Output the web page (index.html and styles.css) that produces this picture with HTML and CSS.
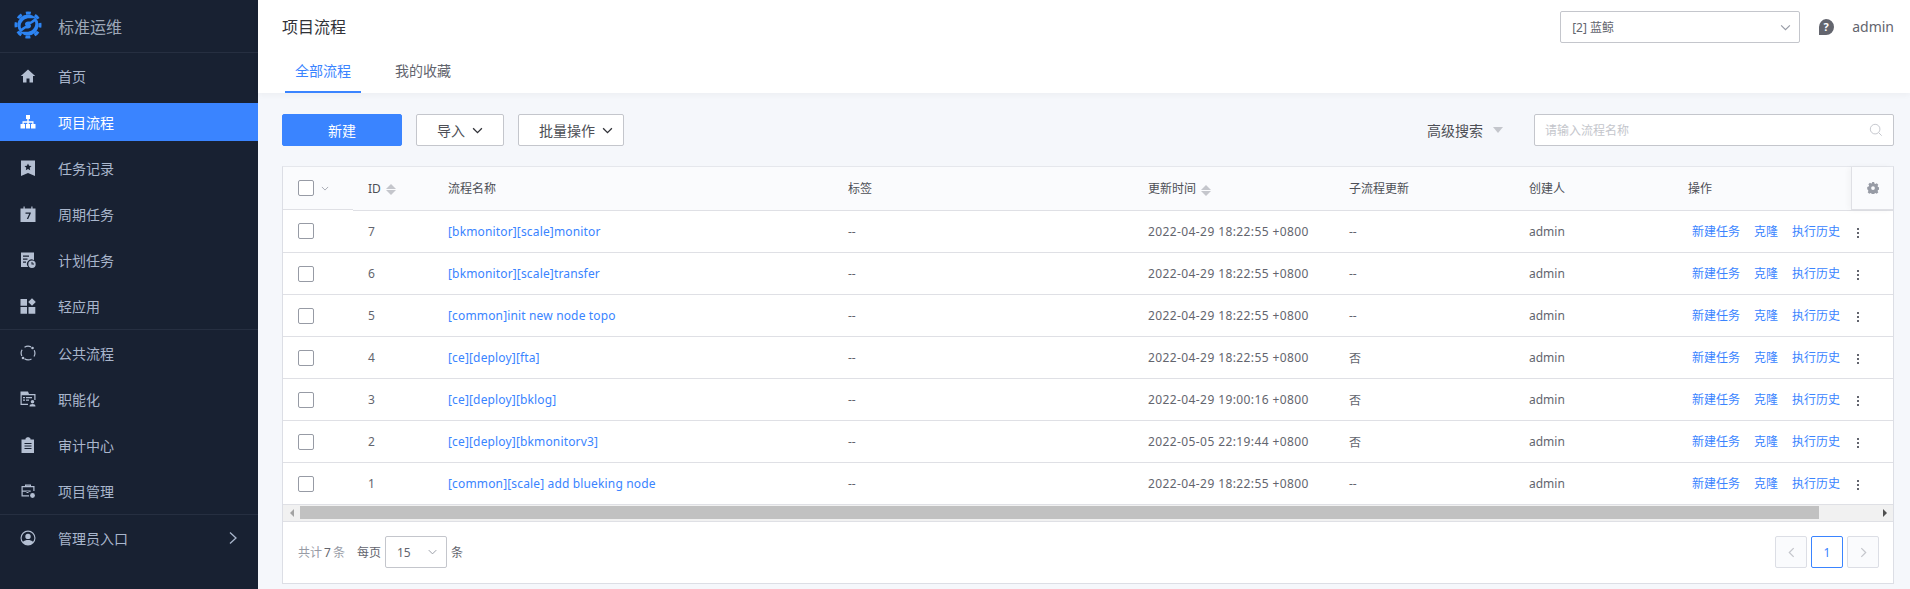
FILE: index.html
```html
<!DOCTYPE html>
<html lang="zh-CN">
<head>
  <meta charset="UTF-8">
  <title>项目流程</title>
  <link rel="stylesheet" href="styles.css">
</head>
<body>

<aside class="side">
  <div class="brand">
    <svg class="logo" viewBox="0 0 30 30"><circle cx="15" cy="15" r="10.500" fill="#2d84f2"/><circle cx="15" cy="15" r="12" fill="none" stroke="#2d84f2" stroke-width="3" stroke-dasharray="5 4.420" stroke-dashoffset="2.500"/><path fill="#182132" d="M8 18.500c-1-3.200.2-6.300 2.500-8.200 1.800-1.400 3.800-2 5.900-2h5.400l-4.300 3.300h-2.500c-1.600 0-3 1.100-3 2.400 0 .7.300 1.200.8 1.500zM22 11.500c1 3.200-.2 6.300-2.500 8.200-1.800 1.400-3.800 2-5.900 2H8.200l4.300-3.300h2.500c1.600 0 3-1.100 3-2.400 0-.7-.3-1.200-.8-1.500z"/></svg>
    <span>标准运维</span>
  </div>
  <div class="group">
    <a class="item"><svg viewBox="0 0 16 16"><path d="M8 1.500L.8 8h2.200v6.500h3.500v-4h3v4H13V8h2.200z"/></svg>首页</a>
    <a class="item on"><svg viewBox="0 0 16 16"><path d="M6 1h4v4H8.700v2.300h4.800V10H15.500v4.500h-4.500V10h1.300V8.700H8.700V10H10v4.500H6V10h1.300V8.700H3.700V10H5v4.500H.5V10h2V7.300h4.800V5H6z"/></svg>项目流程</a>
    <a class="item"><svg viewBox="0 0 16 16"><path fill-rule="evenodd" d="M1 .5h14v15.500L8 13l-7 3zM8 3.500l-1.100 2.300-2.400.3 1.800 1.700-.5 2.500L8 9.100l2.200 1.200-.5-2.500 1.800-1.700-2.400-.3z"/></svg>任务记录</a>
    <a class="item"><svg viewBox="0 0 16 16"><path fill-rule="evenodd" d="M.5 2.500h3V.5h1.200v2h6.600V.5h1.200v2h3v13.500H.5zM5.500 6.500v1.200h3.700l-2.400 5.300h1.400l2.600-5.800V6.500z"/></svg>周期任务</a>
    <a class="item"><svg viewBox="0 0 16 16"><path fill-rule="evenodd" d="M1 .5h13v7.700a4.500 4.500 0 0 0-5.800 6.800H1zM3 3.500v1.200h6V3.500zM3 6.500v1.200h4.500V6.500zM3 9.500v1.200h3V9.500z"/><path fill-rule="evenodd" d="M12 8.500a3.700 3.700 0 1 1 0 7.400 3.700 3.700 0 0 1 0-7.400zM11.500 10v2.600h2.500v-1h-1.500V10z"/></svg>计划任务</a>
    <a class="item"><svg viewBox="0 0 16 16"><path d="M.5 1h6.500v6.800H.5zM.5 9h6.500v6.800H.5zM8.500 9h6.800v6.800H8.500zM12 .2l3.800 3.800-3.800 3.800L8.200 4z"/></svg>轻应用</a>
  </div>
  <div class="group">
    <a class="item"><svg viewBox="0 0 16 16" class="line"><path d="M4.500 2.300A6.700 6.700 0 0 1 11 1.900M14.200 5.200a6.700 6.700 0 0 1-.2 6.300M11.500 14a6.700 6.700 0 0 1-7-.2M1.800 11a6.700 6.700 0 0 1 .3-6.300"/><circle class="dot" cx="12.500" cy="3" r="1.300"/><circle class="dot" cx="3" cy="13" r="1.300"/></svg>公共流程</a>
    <a class="item"><svg viewBox="0 0 16 16"><path fill-rule="evenodd" d="M.5.500h7.500l1 2.500h6.500v6h-1.200V4.300H1.700v8.500H8V14H.5zM3 6h2v1.200H3zM6 6h6v1.200H6zM3 8.500h2v1.200H3zM6 8.500h3v1.200H6z"/><path d="M12.500 9a1.800 1.800 0 1 1 0 3.600 1.800 1.800 0 0 1 0-3.600zM9.500 15.500c0-1.800 1.300-2.500 3-2.500s3 .7 3 2.500z"/></svg>职能化</a>
    <a class="item"><svg viewBox="0 0 16 16"><path fill-rule="evenodd" d="M5.500 2.500V1.500L7 .2h2l1.500 1.300v1h3.500v13.500H1.500V2.500zM4.500 6v1h7V6zM4.500 8.500v1h7v-1zM4.500 11v1h7v-1z"/></svg>审计中心</a>
    <a class="item"><svg viewBox="0 0 16 16"><path fill-rule="evenodd" d="M5 3V1.500h6V3h3.500v5h-1.200V4.200H2.700v3.300h8v1.200h-8v3.600H9V13.500H1.500V3zM6.200 2.700V3h3.600v-.3zM6.500 7h2v3h-2z"/><circle cx="12.500" cy="12.500" r="2.400"/></svg>项目管理</a>
  </div>
  <div class="group last">
    <a class="item"><svg viewBox="0 0 16 16"><path fill-rule="evenodd" d="M8 .5a7.500 7.500 0 1 1 0 15A7.500 7.500 0 0 1 8 .5zm0 1.200a6.300 6.300 0 0 0-5 10.100C4.200 10.600 6 10 8 10s3.800.6 5 1.800A6.300 6.300 0 0 0 8 1.700zM8 3.700a2.700 2.700 0 1 1 0 5.400 2.700 2.700 0 0 1 0-5.400z"/></svg>管理员入口<svg class="arrow" viewBox="0 0 10 16"><path d="M2 2.500L8 8l-6 5.500" fill="none" stroke="#a9b6cc" stroke-width="1.300"/></svg></a>
  </div>
</aside>

<main class="main">
  <header class="top">
    <div class="top-row">
      <h1>项目流程</h1>
      <div class="top-right">
        <div class="select proj"><span>[2] 蓝鲸</span><svg class="chev" viewBox="0 0 12 8"><path d="M1 1.500L6 6.500l5-5"/></svg></div>
        <svg class="help" viewBox="0 0 16 16"><path fill="#63656e" d="M8 0a8 8 0 1 1 0 16H1v-8a8 8 0 0 1 7-8z"/><text x="8" y="12" text-anchor="middle" class="help-q">?</text></svg>
        <span class="user">admin</span>
      </div>
    </div>
    <nav class="tabs">
      <a class="tab on">全部流程</a>
      <a class="tab">我的收藏</a>
    </nav>
  </header>

  <section class="body">
    <div class="toolbar">
      <button class="btn primary">新建</button>
      <button class="btn">导入<svg class="chev dark" viewBox="0 0 12 8"><path d="M1 1.500L6 6.500l5-5"/></svg></button>
      <button class="btn batch">批量操作<svg class="chev dark" viewBox="0 0 12 8"><path d="M1 1.500L6 6.500l5-5"/></svg></button>
      <div class="search-side">
        <span class="adv">高级搜索<i class="tri"></i></span>
        <div class="search"><span>请输入流程名称</span><svg viewBox="0 0 16 16"><circle cx="7" cy="7" r="5.500"/><path d="M11 11l3.500 3.500"/></svg></div>
      </div>
    </div>

    <div class="panel">
      <table class="grid">
        <colgroup>
          <col class="c-check"><col class="c-id"><col class="c-name"><col class="c-tag"><col class="c-time"><col class="c-sub"><col class="c-user"><col>
        </colgroup>
        <thead>
          <tr>
            <th><span class="box"></span><svg class="chev small" viewBox="0 0 12 8"><path d="M1 1.500L6 6.500l5-5"/></svg></th>
            <th>ID<i class="sort"></i></th>
            <th>流程名称</th>
            <th>标签</th>
            <th>更新时间<i class="sort"></i></th>
            <th>子流程更新</th>
            <th>创建人</th>
            <th>操作</th>
          </tr>
        </thead>
        <tbody id="rows"></tbody>
      </table>
      <div class="gear"><svg viewBox="0 0 16 16"><path fill-rule="evenodd" fill="#979ba5" d="M6.500 0h3l.4 1.900 1.400.6 1.700-1 2.100 2.100-1 1.700.6 1.400 1.900.4v3l-1.900.4-.6 1.400 1 1.700-2.100 2.100-1.700-1-1.400.6-.4 1.900h-3l-.4-1.900-1.400-.6-1.700 1-2.100-2.100 1-1.700-.6-1.400L.3 9.500v-3l1.900-.4.600-1.400-1-1.700 2.100-2.100 1.700 1 1.400-.6zM8 5.500a2.500 2.500 0 1 0 0 5 2.500 2.500 0 0 0 0-5z"/></svg></div>
      <div class="hscroll">
        <i class="sb-l"></i>
        <div class="track"><div class="thumb"></div></div>
        <i class="sb-r"></i>
      </div>
      <div class="pager">
        <span class="total">共计<b>7</b>条</span>
        <span class="per">每页</span>
        <div class="select size"><span>15</span><svg class="chev" viewBox="0 0 12 8"><path d="M1 1.500L6 6.500l5-5"/></svg></div>
        <span class="per">条</span>
        <div class="pages">
          <a class="page off"><svg viewBox="0 0 8 12"><path d="M6.500 1L1.500 6l5 5"/></svg></a>
          <a class="page on">1</a>
          <a class="page off"><svg viewBox="0 0 8 12"><path d="M1.500 1l5 5-5 5"/></svg></a>
        </div>
      </div>
    </div>
  </section>
</main>

<script>
const data = [
  [7, '[bkmonitor][scale]monitor', '2022-04-29 18:22:55 +0800', '--'],
  [6, '[bkmonitor][scale]transfer', '2022-04-29 18:22:55 +0800', '--'],
  [5, '[common]init new node topo', '2022-04-29 18:22:55 +0800', '--'],
  [4, '[ce][deploy][fta]', '2022-04-29 18:22:55 +0800', '否'],
  [3, '[ce][deploy][bklog]', '2022-04-29 19:00:16 +0800', '否'],
  [2, '[ce][deploy][bkmonitorv3]', '2022-05-05 22:19:44 +0800', '否'],
  [1, '[common][scale] add blueking node', '2022-04-29 18:22:55 +0800', '--']
];
const tbody = document.getElementById('rows');
data.forEach(r => {
  const tr = document.createElement('tr');
  tr.innerHTML = '<td><span class="box"></span></td>' +
    '<td>' + r[0] + '</td>' +
    '<td><a class="link name">' + r[1] + '</a></td>' +
    '<td>--</td>' +
    '<td class="date">' + r[2] + '</td>' +
    '<td>' + r[3] + '</td>' +
    '<td>admin</td>' +
    '<td class="ops"><a class="link">新建任务</a><a class="link">克隆</a><a class="link">执行历史</a><span class="more"><i></i><i></i><i></i></span></td>';
  tbody.appendChild(tr);
});
</script>

</body>
</html>
```

FILE: styles.css
```css
* { box-sizing: border-box; }
html, body { height: 100%; }
body { margin: 0; display: flex; height: 589px; overflow: hidden; font-family: "Noto Sans", "Noto Sans CJK SC", sans-serif; font-size: 12px; color: #63656e; background: #f5f7fb; }
a { text-decoration: none; }
svg { display: block; flex: none; }

/* sidebar */
.side { width: 258px; flex: none; background: #182132; color: #a9b6cc; font-size: 14px; }
.brand { height: 53px; display: flex; align-items: center; padding-left: 13px; border-bottom: 1px solid #262f41; font-size: 16px; color: #9ea8b8; }
.brand span { margin-left: 15px; }
.logo { width: 30px; height: 30px; margin-bottom: 2px; }
.group { display: flex; flex-direction: column; gap: 8px; padding: 4px 0; border-bottom: 1px solid #262f41; }
.group.last { border-bottom: none; }
.item { height: 38px; display: flex; align-items: center; padding-left: 20px; color: #a9b6cc; }
.item svg { width: 16px; height: 16px; margin-right: 22px; fill: #b4bfd2; }
.item svg.line { fill: none; stroke: #b4bfd2; stroke-width: 1.200; }
.item .dot { fill: #b4bfd2; stroke: none; }
.item.on { background: #3a84ff; color: #fff; }
.item.on svg { fill: #fff; }
.item svg.arrow { width: 10px; height: 16px; margin: 0 0 0 auto; position: relative; left: -20px; fill: none; }

/* header */
.main { flex: 1; min-width: 0; display: flex; flex-direction: column; }
.top { height: 93px; background: #fff; box-shadow: 0 2px 6px rgba(0, 0, 0, .04); padding: 0 16px 0 24px; position: relative; }
.top-row { height: 53px; display: flex; align-items: center; justify-content: space-between; }
h1 { margin: 0; font-size: 16px; font-weight: 400; color: #313238; position: relative; top: -1px; }
.top-right { display: flex; align-items: center; }
.select { display: flex; align-items: center; justify-content: space-between; height: 32px; border: 1px solid #c4c6cc; border-radius: 2px; background: #fff; }
.proj { width: 240px; padding: 0 8px 0 11px; margin-top: 1px; }
.chev { width: 9px; height: 6px; fill: none; stroke: #979ba5; stroke-width: 1.300; }
.proj .chev { width: 11px; height: 7px; }
.help { width: 16px; height: 16px; margin-left: 18px; }
.help-q { font-size: 11px; font-weight: 700; fill: #fff; }
.user { margin-left: 18px; font-size: 14px; }
.tabs { display: flex; height: 40px; margin-left: 3px; }
.tab { width: 76px; margin-right: 24px; text-align: center; line-height: 35px; height: 40px; font-size: 14px; color: #63656e; }
.tab.on { color: #3a84ff; border-bottom: 2px solid #3a84ff; }

/* toolbar */
.body { flex: 1; padding: 21px 16px 0 24px; }
.toolbar { display: flex; align-items: center; height: 32px; }
.btn { height: 32px; padding: 0; border: 1px solid #c4c6cc; border-radius: 2px; background: #fff; color: #4d4f56; font: inherit; font-size: 14px; display: flex; align-items: center; justify-content: center; width: 88px; margin-right: 14px; }
.btn .chev { margin-left: 7px; }
.chev.dark { width: 11px; height: 7px; stroke: #313238; stroke-width: 1.500; }
.btn.primary { width: 120px; background: #3a84ff; border-color: #3a84ff; color: #fff; }
.btn.batch { width: 106px; padding-left: 10px; }
.search-side { margin-left: auto; display: flex; align-items: center; }
.adv { display: flex; align-items: center; font-size: 14px; color: #4d4f56; }
.tri { width: 0; height: 0; border: 5px solid transparent; border-top: 6px solid #c4c6cc; border-bottom: 0; margin-left: 10px; }
.search { width: 360px; height: 32px; margin-left: 31px; display: flex; align-items: center; justify-content: space-between; padding: 0 10px; background: #fff; border: 1px solid #c4c6cc; border-radius: 2px; color: #c4c6cc; }
.search svg { width: 14px; height: 14px; fill: none; stroke: #c4c6cc; stroke-width: 1.100; }

/* table */
.panel { margin-top: 20px; border: 1px solid #dcdee5; border-top: 1px solid #e5e7ec; background: #fff; position: relative; }
.grid { width: 100%; table-layout: fixed; border-collapse: collapse; }
.c-check { width: 70px; }
.c-id { width: 80px; }
.c-name { width: 400px; }
.c-tag { width: 300px; }
.c-time { width: 201px; }
.c-sub { width: 180px; }
.c-user { width: 159px; }
th, td { padding: 0 15px; text-align: left; font-weight: 400; border-bottom: 1px solid #dfe0e5; white-space: nowrap; }
th { height: 43px; background: #fafbfd; color: #4d4f56; }
td { height: 42px; padding-top: 1px; }
th:first-child { display: flex; align-items: center; gap: 7px; }
.box { display: block; width: 16px; height: 16px; border: 1px solid #979ba5; border-radius: 2px; background: #fff; }
.chev.small { width: 8px; height: 5px; }
.sort { display: inline-flex; flex-direction: column; gap: 1px; vertical-align: middle; margin-left: 5px; }
.sort::before { content: ""; border: 5px solid transparent; border-bottom: 5px solid #c4c6cc; border-top: 0; }
.sort::after { content: ""; border: 5px solid transparent; border-top: 5px solid #c4c6cc; border-bottom: 0; }
.date { letter-spacing: .4px; }
.link { color: #3a84ff; }
.name { letter-spacing: .15px; }
.ops { padding-left: 19px; padding-top: 0; }
.ops .link { margin-right: 14px; }
.more { display: inline-flex; flex-direction: column; gap: 2px; vertical-align: middle; margin: 0 0 0 3px; }
.more i { display: block; width: 2px; height: 2px; background: #63656e; }
.gear { position: absolute; right: 0; top: 0; width: 42px; height: 43px; display: flex; align-items: center; justify-content: center; background: #fafbfd; border-left: 1px solid #dfe0e5; border-bottom: 1px solid #dfe0e5; box-shadow: -2px 0 6px rgba(0, 0, 0, .04); }
.gear svg { width: 12px; height: 12px; }
.hscroll { height: 17px; display: flex; align-items: center; background: #f1f1f1; border-bottom: 1px solid #dfe0e5; }
.sb-l, .sb-r { width: 17px; flex: none; display: flex; justify-content: center; }
.sb-l::before { content: ""; border: 4px solid transparent; border-right: 4px solid #a3a3a3; border-left: 0; }
.sb-r::before { content: ""; border: 4px solid transparent; border-left: 4px solid #505050; border-right: 0; }
.track { flex: 1; height: 13px; }
.thumb { width: 1519px; height: 100%; background: #c1c1c1; }
.pager { height: 61px; display: flex; align-items: center; padding: 0 14px 0 15px; }
.total { color: #979ba5; margin-right: 12px; }
.total b { font-weight: 400; color: #63656e; margin: 0 2px; }
.size { width: 62px; padding: 0 9px 0 11px; margin: 0 4px; color: #63656e; }
.pages { margin-left: auto; display: flex; gap: 4px; }
.page { width: 32px; height: 32px; border: 1px solid #dcdee5; border-radius: 2px; display: flex; align-items: center; justify-content: center; background: #fafbfd; }
.page.on { border-color: #3a84ff; color: #3a84ff; background: #fff; }
.page svg { width: 7px; height: 11px; fill: none; stroke: #c4c6cc; stroke-width: 1.400; }
```
